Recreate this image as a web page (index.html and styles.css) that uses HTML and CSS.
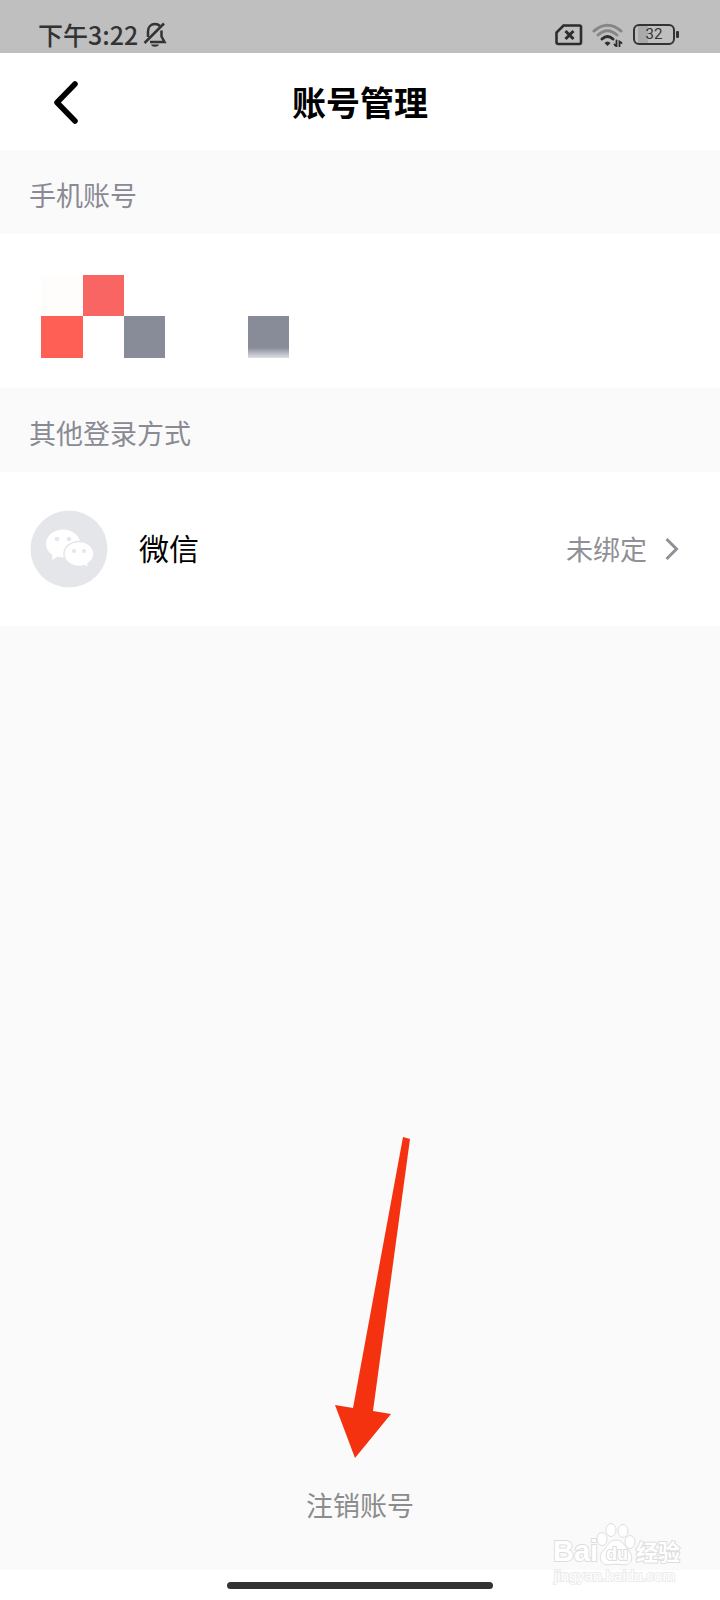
FILE: index.html
```html
<!DOCTYPE html>
<html lang="zh-CN">
<head>
    <meta charset="UTF-8">
    <meta name="viewport" content="width=device-width, initial-scale=1.0">
    <title>账号管理</title>
    <link rel="stylesheet" href="styles.css">
</head>
<body>

    <div class="status-bar">
        <div class="status-left">
            <span class="time">下午3:22</span>
            <svg width="24" height="26" viewBox="0 0 24 26" fill="none" stroke="#333" stroke-width="2.500">
                <path d="M5 15V9.500C5 5 8 2 12 2c2 0 3.500.6 5 2"/>
                <path d="M18.500 8.500v6l3 5.500H7"/>
                <path d="M1.500 21L21 1.500"/>
                <path d="M8 22.500h8c-1 3-7 3-8 0z" fill="#333" stroke="none"/>
            </svg>
        </div>
        <div class="status-right">
            <svg width="28" height="22" viewBox="0 0 28 22" fill="none" stroke="#2d2d2d">
                <path d="M8.500 1.500H24.500Q26 1.500 26 3V18Q26 20 24.500 20H3.500Q1.500 20 1.500 18V8.500z" stroke-width="2.600"/>
                <path d="M10.500 7l8 8M18.500 7l-8 8" stroke-width="3"/>
            </svg>
            <svg width="32" height="24" viewBox="0 0 32 24" fill="none" stroke-linecap="round">
                <path d="M2 8Q15.500-3.500 29 8" stroke="#868686" stroke-width="3"/>
                <path d="M6 12Q15.500 3.500 25 12" stroke="#868686" stroke-width="3"/>
                <path d="M10 16Q15.500 11 21 16" stroke="#2d2d2d" stroke-width="3"/>
                <path d="M12.500 20q3-3 6 0l-3 3z" fill="#2d2d2d"/>
                <path d="M24.500 17.500v6l-2-2M27.500 23.500v-5l2 1.500" stroke="#2d2d2d" stroke-width="1.800"/>
            </svg>
            <div class="battery">
                <span>32</span>
            </div>
        </div>
    </div>

    <header class="header">
        <button type="button" class="back" aria-label="返回">
            <svg width="26" height="44" viewBox="0 0 26 44" fill="none" stroke="#000" stroke-width="5.500" stroke-linecap="round" stroke-linejoin="round">
                <path d="M22 4L4 22.500L22 41"/>
            </svg>
        </button>
        <h1>账号管理</h1>
    </header>

    <main class="content">
        <h2>手机账号</h2>
        <div class="row">
            <svg class="mosaic" width="260" height="84" viewBox="0 0 260 84">
                <defs>
                    <linearGradient id="fade" x1="0" y1="0" x2="0" y2="1">
                        <stop offset="0.75" stop-color="#888b98"/>
                        <stop offset="1" stop-color="#dfe0e4"/>
                    </linearGradient>
                </defs>
                <rect x="0" y="1" width="42" height="41" fill="#fffdfc"/>
                <rect x="42" y="0" width="41" height="41" fill="#f96562"/>
                <rect x="0" y="41" width="42" height="42" fill="#ff5f55"/>
                <rect x="83" y="41" width="41" height="42" fill="#888b98"/>
                <rect x="207" y="41" width="41" height="42" fill="url(#fade)"/>
            </svg>
        </div>

        <h2>其他登录方式</h2>
        <a href="#" class="row">
            <svg width="78" height="78" viewBox="0 0 78 78">
                <circle cx="39" cy="39" r="38.500" fill="#e5e6ea"/>
                <path d="M33 19.500c-9.500 0-17 6.500-17 14.500 0 4.500 2.500 8.500 6.500 11l-.5 5 5.500-3.500c2 .6 4 .9 6 .9 9.500 0 17-6 17-13.500S42.500 19.500 33 19.500z" fill="#fff"/>
                <path d="M49 31.500c-8.300 0-15 5.500-15 12.500s6.700 12.500 15 12.500c2 0 4-.3 5.500-1l4.500 2.500-1-4.500c3.500-2.300 6-5.700 6-9.500 0-7-6.700-12.500-15-12.500z" fill="#fff" stroke="#e5e6ea" stroke-width="1.500"/>
                <g fill="#e5e6ea">
                    <circle cx="27" cy="29" r="2.300"/>
                    <circle cx="39" cy="29" r="2.300"/>
                    <circle cx="44" cy="41" r="2"/>
                    <circle cx="54" cy="41" r="2"/>
                </g>
            </svg>
            <span class="name">微信</span>
            <span class="state">未绑定</span>
            <svg width="14" height="24" viewBox="0 0 14 24" fill="none" stroke="#909096" stroke-width="3">
                <path d="M1.500 2L11.500 12L1.500 22"/>
            </svg>
        </a>

        <div class="bottom">
            <svg class="arrow" width="76" height="322" viewBox="0 0 76 322">
                <path d="M68 0L75 2L38 274L56 277L20 321L0 268L18 271z" fill="#f53210"/>
            </svg>
            <button type="button" class="logout">注销账号</button>
        </div>
    </main>

    <div class="home-bar"><span></span></div>

    <svg class="watermark" width="136" height="66" viewBox="0 0 136 66" fill="#fff" stroke="#dedede">
        <g class="brand">
            <text x="1" y="40">Bai</text>
            <text class="cn" x="84" y="39">经验</text>
        </g>
        <ellipse cx="50" cy="18" rx="5" ry="6.500"/>
        <ellipse cx="59" cy="9" rx="5" ry="6.500"/>
        <ellipse cx="71" cy="10" rx="5" ry="6.500"/>
        <ellipse cx="78" cy="21" rx="5" ry="6.500"/>
        <path d="M64 19c-7 0-9 7-13 11-5 5-3 14 5 14 3 0 5-1 8-1s5 1 8 1c8 0 10-9 5-14-4-4-6-11-13-11z"/>
        <text class="du" x="54" y="39">du</text>
        <text class="url" x="2" y="60">jingyan.baidu.com</text>
    </svg>

</body>
</html>
```
FILE: styles.css
```css
* {
    box-sizing: border-box;
}

body {
    font-family: "Noto Sans CJK SC", sans-serif;
    margin: 0;
    min-height: 100vh;
    display: flex;
    flex-direction: column;
    background-color: #fff;
    position: relative;
}

svg {
    display: block;
    flex-shrink: 0;
}

button {
    padding: 0;
    border: none;
    background: none;
    font-family: inherit;
    cursor: pointer;
}

.status-bar {
    height: 53px;
    padding: 16px 41px 0 38px;
    display: flex;
    justify-content: space-between;
    align-items: center;
    background-color: #bfbfbf;
    color: #333;
}

.status-left {
    display: flex;
    align-items: center;
    gap: 5px;
}

.time {
    padding-bottom: 2px;
    font-size: 25px;
    font-weight: 500;
    line-height: 34px;
}

.status-right {
    display: flex;
    align-items: center;
    gap: 9px;
}

.battery {
    width: 42px;
    height: 21px;
    margin-right: 4px;
    border: 2px solid #333;
    border-radius: 6px;
    background: linear-gradient(to right, #aaa 10px, transparent 10px) 3px 0 no-repeat;
    font-family: Roboto, sans-serif;
    font-size: 15px;
    line-height: 17px;
    text-align: center;
    position: relative;
}

.battery::after {
    content: "";
    position: absolute;
    right: -6px;
    top: 5px;
    width: 3px;
    height: 7px;
    border-radius: 1px;
    background-color: #333;
}

.header {
    height: 97px;
    padding: 0 53px;
    display: grid;
    grid-template-columns: 26px 1fr 26px;
    align-items: center;
}

h1 {
    margin: 0;
    font-size: 34px;
    font-weight: 700;
    line-height: 48px;
    text-align: center;
    color: #000;
}

.content {
    flex: 1;
    display: flex;
    flex-direction: column;
    background-color: #fafafa;
}

h2 {
    margin: 0;
    padding: 25px 29px 19px;
    font-size: 27px;
    font-weight: 400;
    line-height: 40px;
    color: #8a8a94;
}

.row {
    min-height: 154px;
    padding: 0 41px 0 30px;
    display: flex;
    align-items: center;
    background-color: #fff;
    text-decoration: none;
}

.mosaic {
    margin: 12px 0 0 11px;
}

.name {
    flex: 1;
    margin-left: 31px;
    padding-bottom: 4px;
    font-size: 30px;
    line-height: 44px;
    color: #000;
}

.state {
    margin-right: 18px;
    font-size: 27px;
    line-height: 40px;
    color: #909096;
}

.bottom {
    margin-top: auto;
    padding-bottom: 45px;
    text-align: center;
    position: relative;
}

.logout {
    font-size: 27px;
    line-height: 40px;
    color: #8c8c8c;
}

/* pointer towards the logout button */
.arrow {
    position: absolute;
    left: 50%;
    bottom: 111px;
    margin-left: -25px;
}

.home-bar {
    height: 30px;
    display: flex;
    justify-content: center;
    align-items: center;
}

.home-bar span {
    width: 37%;
    height: 7px;
    border-radius: 4px;
    background-color: #333;
}

.watermark {
    position: absolute;
    right: 32px;
    bottom: 13px;
    font-family: "Liberation Sans", "Noto Sans CJK SC", sans-serif;
}

.watermark text {
    paint-order: stroke;
    stroke-width: 2px;
}

.brand {
    font-size: 29px;
    font-weight: 700;
}

.brand .cn {
    font-size: 22px;
}

.du {
    font-size: 18px;
    font-weight: 700;
}

.watermark .url {
    font-size: 15px;
    stroke: #ececec;
}
```
